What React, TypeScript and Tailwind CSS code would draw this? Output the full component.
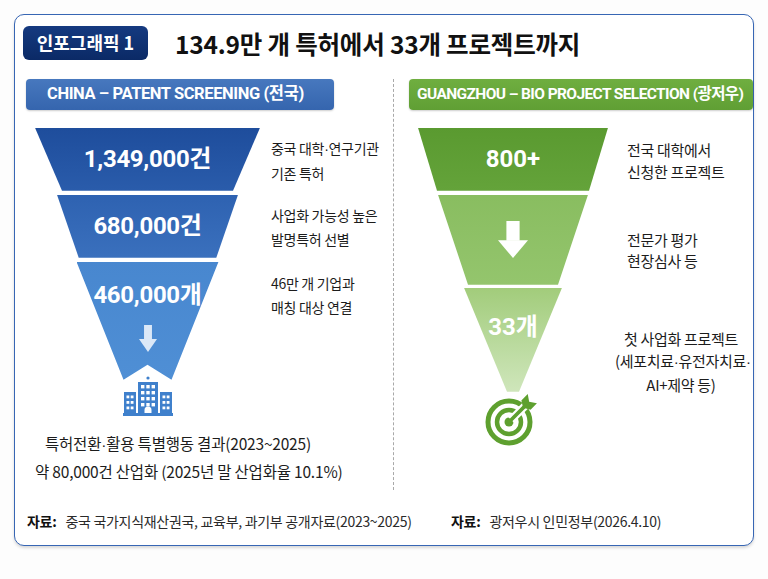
import React from "react"

const kr = "font-['Noto_Sans_CJK_KR',sans-serif]"
const num = "font-['Roboto','Noto_Sans_CJK_KR',sans-serif]"

function Dot() {
  return <span className="font-['Liberation_Sans',sans-serif]">·</span>
}

function Building() {
  return (
    <svg width="50" height="40" viewBox="0 0 50 40">
      <g fill="#3f80cc">
        <circle cx="25" cy="2" r="1.6" />
        <rect x="15" y="6" width="20" height="33" />
        <rect x="1" y="16" width="12" height="23" />
        <rect x="37" y="16" width="12" height="23" />
        <rect x="0" y="37" width="50" height="3" />
      </g>
      <g fill="#ffffff">
        {[9, 15, 21, 27].map((y) =>
          [18, 23.3, 28.6].map((x) => <rect key={`${x}-${y}`} x={x} y={y} width="3.4" height="3.4" />)
        )}
        {[19.5, 25, 30.5].map((y) =>
          [3.5, 7.7, 39.5, 43.7].map((x) => <rect key={`s${x}-${y}`} x={x} y={y} width="2.8" height="2.8" />)
        )}
        <path d="M21.5 37 V34 a3.5 3.5 0 0 1 7 0 V37 Z" />
      </g>
    </svg>
  )
}

function Target() {
  return (
    <svg width="60" height="56" viewBox="0 0 60 56">
      <circle cx="26" cy="29" r="21" fill="none" stroke="#5ea02f" strokeWidth="5" />
      <circle cx="26" cy="29" r="12" fill="none" stroke="#5ea02f" strokeWidth="4.5" />
      <circle cx="26" cy="29" r="4.5" fill="#5ea02f" />
      <g transform="translate(26 29) rotate(-45)">
        <line x1="3" y1="0" x2="26" y2="0" stroke="#ffffff" strokeWidth="8" />
        <line x1="0" y1="0" x2="26" y2="0" stroke="#5ea02f" strokeWidth="3.6" strokeLinecap="round" />
        <polygon points="20,0 24,-6.5 33,-6.5 28.5,0 33,6.5 24,6.5" fill="#5ea02f" />
      </g>
    </svg>
  )
}

function DownArrow({ w, h, color }: { w: number; h: number; color: string }) {
  const s = w * 0.28
  const head = h * 0.48
  return (
    <svg width={w} height={h} viewBox={`0 0 ${w} ${h}`}>
      <rect x={s} y="0" width={w - 2 * s} height={h - head + 0.5} fill={color} />
      <polygon points={`0,${h - head} ${w},${h - head} ${w / 2},${h}`} fill={color} />
    </svg>
  )
}

export default function App() {
  return (
    <div className={`h-[579px] w-[768px] overflow-hidden bg-[#fdfdfd] pt-[14px] ${kr}`}>
      <div className="mx-[14px] flex h-[532px] flex-col rounded-[10px] border-[1.5px] border-[#3766b4] bg-white shadow-[0_2px_3px_rgba(0,0,0,0.15)]">
        {/* title */}
        <div className="flex items-center pl-[8px] pt-[8px]">
          <div className="flex h-[34px] w-[125px] items-center justify-center rounded-[6px] bg-linear-to-b from-[#153a80] to-[#0b2a66] text-[18px] font-bold text-white">
            인포그래픽 1
          </div>
          <div className="ml-[27px] mt-[3px] text-[24.5px] font-semibold tracking-[-0.2px] text-[#111]">
            134.9만 개 특허에서 33개 프로젝트까지
          </div>
        </div>

        {/* main */}
        <div className="mt-[16px] flex h-[411px]">
          {/* china */}
          <div className="flex w-[382px] flex-col">
            <div className="ml-[11px] flex h-[31px] w-[308px] items-center rounded-[4px] bg-linear-to-b from-[#4778be] to-[#3565ae] pl-[21px] shadow-[0_1px_2px_rgba(0,0,0,0.2)]">
              <span className={`${num} whitespace-nowrap text-[16.5px] font-bold tracking-[-0.4px] text-white`}>
                CHINA – PATENT SCREENING (전국)
              </span>
            </div>

            <div className="mt-[18px] flex pl-[20px]">
              <div className="flex w-[225px] flex-col items-center">
                <div className="flex h-[63px] w-[225px] items-center justify-center bg-linear-to-b from-[#1e4d9c] to-[#2a5cab] [clip-path:polygon(0_0,100%_0,88%_100%,12%_100%)]">
                  <span className={`${num} text-[24px] font-bold tracking-[-0.3px] text-white`}>1,349,000건</span>
                </div>
                <div className="mt-[4px] flex h-[63px] w-[181px] items-center justify-center bg-linear-to-b from-[#2e62b1] to-[#3a70bd] [clip-path:polygon(0_0,100%_0,88%_100%,12%_100%)]">
                  <span className={`${num} text-[24px] font-bold tracking-[-0.3px] text-white`}>680,000건</span>
                </div>
                <div className="mt-[4px] flex h-[118px] w-[142px] flex-col items-center bg-linear-to-b from-[#4887cf] to-[#4f8fd5] pt-[19px] [clip-path:polygon(0_0,100%_0,95px_118px,71px_103px,47px_118px)]">
                  <span className={`${num} text-[24px] font-bold leading-[28px] tracking-[-0.3px] text-white`}>460,000개</span>
                  <div className="mt-[16px]">
                    <DownArrow w={18} h={27} color="#dbe8f7" />
                  </div>
                </div>
                <div className="-mt-[4px]">
                  <Building />
                </div>
              </div>

              <div className="ml-[11px] flex flex-col whitespace-nowrap text-[14px] leading-[24px] tracking-[-0.3px] text-[#1c1c1c]">
                <div className="mt-[8px]">
                  중국 대학<Dot />연구기관
                  <br />
                  기존 특허
                </div>
                <div className="mt-[18.5px]">
                  사업화 가능성 높은
                  <br />
                  발명특허 선별
                </div>
                <div className="mt-[19.5px]">
                  46만 개 기업과
                  <br />
                  매칭 대상 연결
                </div>
              </div>
            </div>

            <div className="mt-[14px] whitespace-nowrap text-[15.5px] leading-[26px] tracking-[-0.2px] text-[#1c1c1c]">
              <div className="pl-[30px]">
                특허전환<Dot />활용 특별행동 결과(2023~2025)
              </div>
              <div className="pl-[20px]">약 80,000건 산업화 (2025년 말 산업화율 10.1%)</div>
            </div>
          </div>

          <div className="w-0 border-l border-dashed border-[#a9a9a9]" />

          {/* guangzhou */}
          <div className="flex flex-1 flex-col">
            <div className="ml-[15px] flex h-[31px] w-[344px] items-center rounded-[4px] bg-linear-to-b from-[#6fae40] to-[#609f34] pl-[8px] shadow-[0_1px_2px_rgba(0,0,0,0.2)]">
              <span className={`${num} whitespace-nowrap text-[15.5px] font-bold tracking-[-0.6px] text-white`}>
                GUANGZHOU – BIO PROJECT SELECTION (광저우)
              </span>
            </div>

            <div className="mt-[18px] flex pl-[24px]">
              <div className="flex w-[190px] flex-col items-center">
                <div className="flex h-[63px] w-[190px] items-center justify-center bg-linear-to-b from-[#5a9a30] to-[#64a33a] [clip-path:polygon(0_0,100%_0,90%_100%,10%_100%)]">
                  <span className={`${num} text-[24px] font-bold text-white`}>800+</span>
                </div>
                <div className="mt-[4px] flex h-[90px] w-[150px] items-center justify-center bg-linear-to-b from-[#89bd60] to-[#94c56d] [clip-path:polygon(0_0,100%_0,80%_100%,20%_100%)]">
                  <DownArrow w={30} h={37} color="#ffffff" />
                </div>
                <div className="mt-[3px] flex h-[104px] w-[98px] flex-col items-center bg-linear-to-b from-[#a2cc7b] to-[#cfe6bb] pt-[25px] [clip-path:polygon(0_0,100%_0,55px_100%,43px_100%)]">
                  <span className={`${num} text-[24px] font-bold leading-[28px] text-white`}>33개</span>
                </div>
                <div className="mt-[1px]">
                  <Target />
                </div>
              </div>

              <div className="ml-[7px] flex w-[132px] flex-col whitespace-nowrap text-[15px] tracking-[-0.3px] text-[#1c1c1c]">
                <div className="mt-[11px] pl-[12px] leading-[22px]">
                  전국 대학에서
                  <br />
                  신청한 프로젝트
                </div>
                <div className="mt-[46px] pl-[12px] leading-[21px]">
                  전문가 평가
                  <br />
                  현장심사 등
                </div>
                <div className="mt-[57px] text-center leading-[22.5px]">
                  첫 사업화 프로젝트
                  <br />
                  (세포치료<Dot />유전자치료<Dot />
                  <br />
                  AI+제약 등)
                </div>
              </div>
            </div>
          </div>
        </div>

        {/* footer */}
        <div className="mt-[22px] flex whitespace-nowrap text-[14px] leading-[18px] tracking-[-0.3px] text-[#2a2a2a]">
          <div className="flex w-[436px] pl-[12px]">
            <span className="font-bold text-[#111]">자료:</span>
            <span className="ml-[9px]">중국 국가지식재산권국, 교육부, 과기부 공개자료(2023~2025)</span>
          </div>
          <div className="flex">
            <span className="font-bold text-[#111]">자료:</span>
            <span className="ml-[9px]">광저우시 인민정부(2026.4.10)</span>
          </div>
        </div>
      </div>
    </div>
  )
}
